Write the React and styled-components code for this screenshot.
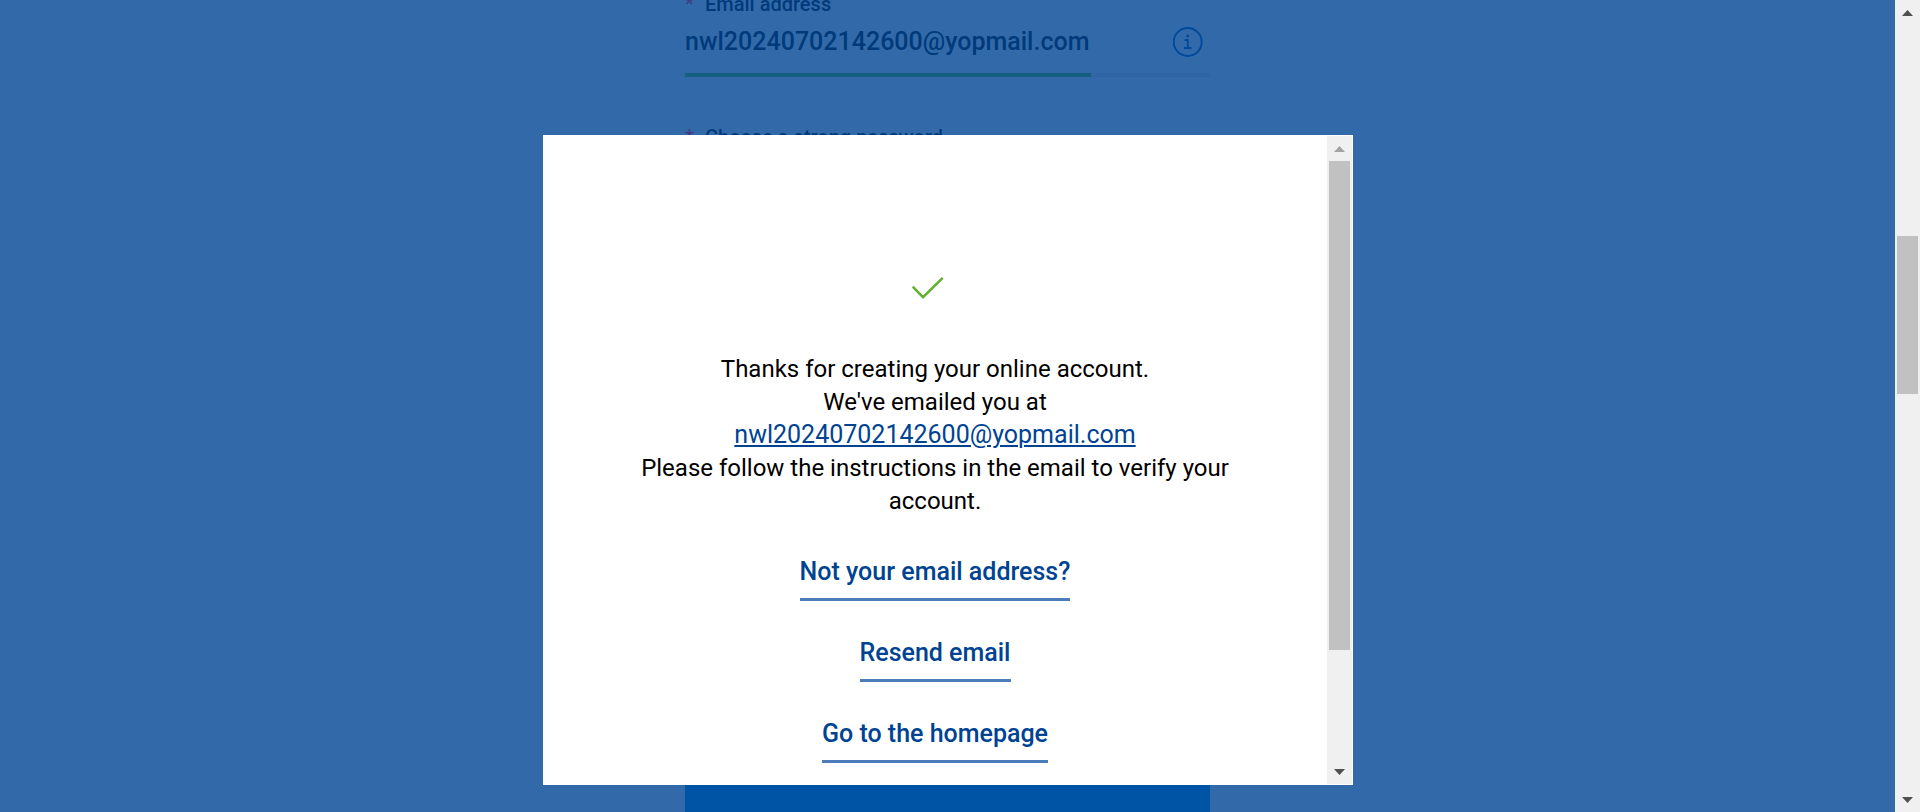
import React from 'react';
import styled, { createGlobalStyle } from 'styled-components';

const GlobalStyle = createGlobalStyle`
  *, *::before, *::after { box-sizing: border-box; }
  body {
    margin: 0;
    overflow: hidden;
    background: #326aa9;
    font-family: Roboto, "Liberation Sans", sans-serif;
  }
`;

const Shell = styled.div`
  display: flex;
  height: 100vh;
`;

const Page = styled.main`
  position: relative;
  flex: 1;
  min-width: 0;
  overflow: hidden;
`;

/* Signup form, seen through the blue backdrop */
const Form = styled.form`
  display: flex;
  flex-direction: column;
  width: 100%;
  max-width: 525px;
  height: calc(100vh + 48px);
  margin: -8px auto 0;
`;

const Field = styled.div`
  display: flex;
  flex-direction: column;
  margin-bottom: 48px;
`;

const Label = styled.label`
  display: flex;
  color: #003a7b;
  font-size: 20px;
  font-weight: 500;
  line-height: 24px;
`;

const Required = styled.span`
  width: 20px;
  color: #443d86;
`;

const InputRow = styled.div`
  display: flex;
  align-items: center;
  height: 57px;
  padding: 0 7px 6px 0;
`;

const Input = styled.input`
  flex: 1;
  min-width: 0;
  height: 48px;
  padding: 0;
  border: 0;
  outline: 0;
  background: transparent;
  color: #003a7b;
  font: 500 25px/29px Roboto, "Liberation Sans", sans-serif;
`;

const InfoButton = styled.button`
  display: flex;
  padding: 0;
  border: 0;
  background: none;
  color: #004a9c;
`;

const Line = styled.div`
  height: 4px;
  background: #2f65a5;

  &::before {
    content: "";
    display: block;
    width: ${({ $filled }) => ($filled ? '406px' : '0')};
    height: 100%;
    background: #155d81;
  }
`;

const Submit = styled.button`
  height: 72px;
  margin-top: auto;
  flex-shrink: 0;
  border: 0;
  background: #0054a6;
`;

const Overlay = styled.div`
  position: absolute;
  inset: 0;
  display: flex;
  justify-content: center;
  padding: 135px 24px 27px;
`;

const Dialog = styled.section`
  display: flex;
  width: 100%;
  max-width: 810px;
  border: 1px solid #fff;
  background: #fff;
`;

const DialogBody = styled.div`
  display: flex;
  flex: 1;
  flex-direction: column;
  align-items: center;
  min-width: 0;
  overflow: hidden;
  padding: 128px 72px 0;
`;

const Message = styled.p`
  margin: 41px 0 37px;
  color: #000;
  font-size: 24px;
  line-height: 33px;
  text-align: center;
`;

const EmailLink = styled.a`
  color: #004393;
  font-size: 25px;
  line-height: 32px;
  text-decoration-thickness: 2px;
  text-underline-offset: 2px;
`;

const Actions = styled.nav`
  display: flex;
  flex-direction: column;
  align-items: center;
  gap: 35px;
`;

const ActionLink = styled.a`
  padding-bottom: 10px;
  border-bottom: 3px solid #4a7db9;
  color: #004393;
  font-size: 25px;
  font-weight: 500;
  line-height: 33px;
  text-decoration: none;
`;

const Bar = styled.div`
  display: flex;
  flex-direction: column;
  flex-shrink: 0;
  width: 25px;
  background: #f0f0f0;
`;

const ArrowBox = styled.div`
  display: flex;
  align-items: center;
  justify-content: center;
  height: 25px;
  color: ${({ $muted }) => ($muted ? '#a3a3a3' : '#505050')};
`;

const Track = styled.div`
  display: grid;
  grid-template-rows: ${({ $rows }) => $rows};
  flex: 1;
  padding: 0 2px;
`;

const Thumb = styled.div`
  grid-row: 2;
  background: #c1c1c1;
`;

function Scrollbar({ rows, atTop }) {
  return (
    <Bar aria-hidden="true">
      <ArrowBox $muted={atTop}>
        <svg width="11" height="6" viewBox="0 0 11 6"><path d="M5.5 0 11 6H0z" fill="currentColor" /></svg>
      </ArrowBox>
      <Track $rows={rows}><Thumb /></Track>
      <ArrowBox>
        <svg width="11" height="6" viewBox="0 0 11 6"><path d="M5.5 6 0 0h11z" fill="currentColor" /></svg>
      </ArrowBox>
    </Bar>
  );
}

const InfoIcon = () => (
  <svg width="30" height="30" viewBox="0 0 30 30" fill="none" stroke="currentColor">
    <circle cx="14.7" cy="15" r="14" strokeWidth="2" />
    <path d="M11.5 13h3.3v8M11 21h7.5" strokeWidth="1.8" />
    <circle cx="14.7" cy="9" r="1.4" fill="currentColor" stroke="none" />
  </svg>
);

const CheckIcon = () => (
  <svg width="46" height="48" viewBox="0 0 46 48" fill="none" aria-hidden="true">
    <path d="M.7 22.7 11 33.2 30.7 13.8" stroke="#5fb12e" strokeWidth="2.5" />
  </svg>
);

const email = 'nwl20240702142600@yopmail.com';

export default function App() {
  return (
    <>
      <GlobalStyle />
      <Shell>
        <Page>
          <Form>
            <Field>
              <Label htmlFor="email"><Required>*</Required>Email address</Label>
              <InputRow>
                <Input id="email" type="email" defaultValue={email} />
                <InfoButton type="button" aria-label="Email address information"><InfoIcon /></InfoButton>
              </InputRow>
              <Line $filled />
            </Field>
            <Field>
              <Label htmlFor="password"><Required>*</Required>Choose a strong password</Label>
              <InputRow>
                <Input id="password" type="password" />
              </InputRow>
              <Line />
            </Field>
            <Submit type="submit" aria-label="Create account" />
          </Form>
          <Overlay>
            <Dialog role="dialog" aria-modal="true" aria-label="Account created">
              <DialogBody>
                <CheckIcon />
                <Message>
                  Thanks for creating your online account.<br />
                  We've emailed you at<br />
                  <EmailLink href={`mailto:${email}`}>{email}</EmailLink><br />
                  Please follow the instructions in the email to verify your account.
                </Message>
                <Actions>
                  <ActionLink href="#email">Not your email address?</ActionLink>
                  <ActionLink href="#resend">Resend email</ActionLink>
                  <ActionLink href="#home">Go to the homepage</ActionLink>
                </Actions>
              </DialogBody>
              <Scrollbar atTop rows="0 489fr 109fr" />
            </Dialog>
          </Overlay>
        </Page>
        <Scrollbar rows="211fr 158fr 393fr" />
      </Shell>
    </>
  );
}
